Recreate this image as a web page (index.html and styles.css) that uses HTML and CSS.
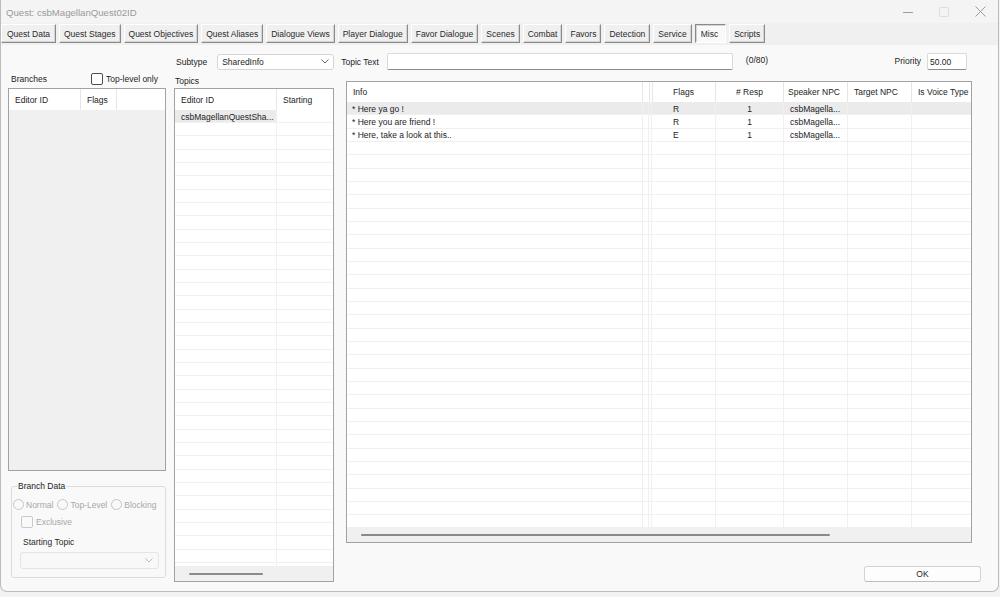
FILE: index.html
```html
<!DOCTYPE html>
<html>
<head>
<meta charset="utf-8">
<title>Quest: csbMagellanQuest02ID</title>
<link rel="stylesheet" href="styles.css">
</head>
<body>
<div class="window">
  <div class="titlebar">
    <span class="title">Quest: csbMagellanQuest02ID</span>
    <div class="controls">
      <span class="ctl"><svg width="10" height="10" viewBox="0 0 10 10"><path d="M0 5.5h10" stroke="#9c9c9c" stroke-width="1"/></svg></span>
      <span class="ctl"><svg width="10" height="10" viewBox="0 0 10 10"><rect x="0.5" y="0.5" width="9" height="9" rx="1" fill="none" stroke="#dcdcdc"/></svg></span>
      <span class="ctl"><svg width="11" height="11" viewBox="0 0 11 11"><path d="M0.5 0.5l10 10M10.5 0.5l-10 10" stroke="#9c9c9c" stroke-width="1"/></svg></span>
    </div>
  </div>

  <div class="tabs">
    <span class="tab tab-first">Quest Data</span>
    <span class="tab">Quest Stages</span>
    <span class="tab">Quest Objectives</span>
    <span class="tab">Quest Aliases</span>
    <span class="tab">Dialogue Views</span>
    <span class="tab">Player Dialogue</span>
    <span class="tab">Favor Dialogue</span>
    <span class="tab">Scenes</span>
    <span class="tab">Combat</span>
    <span class="tab">Favors</span>
    <span class="tab">Detection</span>
    <span class="tab">Service</span>
    <span class="tab tab-active">Misc</span>
    <span class="tab">Scripts</span>
  </div>

  <div class="content">
    <div class="toolbar">
      <span class="lbl lbl-subtype">Subtype</span>
      <div class="combo combo-subtype">
        <span>SharedInfo</span>
        <svg class="chev" width="8" height="5" viewBox="0 0 8 5"><path d="M0.5 0.5l3.5 3.5 3.5-3.5" fill="none" stroke="#666"/></svg>
      </div>
      <span class="lbl lbl-topic">Topic Text</span>
      <div class="field field-topic"></div>
      <span class="count">(0/80)</span>
      <span class="lbl lbl-priority">Priority</span>
      <div class="field field-priority">50.00</div>
    </div>

    <div class="left">
      <div class="branches-head">
        <span>Branches</span>
        <label class="chk-label"><span class="check"></span>Top-level only</label>
      </div>
      <div class="list list-branches">
        <div class="lhead cols-branches">
          <span class="hc">Editor ID</span>
          <span class="hc">Flags</span>
          <span class="hc hc-last"></span>
        </div>
        <div class="lbody lbody-disabled"></div>
      </div>
      <fieldset class="group">
        <legend>Branch Data</legend>
        <div class="radios">
          <span class="opt"><span class="radio"></span>Normal</span>
          <span class="opt"><span class="radio"></span>Top-Level</span>
          <span class="opt"><span class="radio"></span>Blocking</span>
        </div>
        <div class="excl"><span class="check check-dis"></span>Exclusive</div>
        <div class="start-lbl">Starting Topic</div>
        <div class="combo combo-dis">
          <span></span>
          <svg class="chev" width="8" height="5" viewBox="0 0 8 5"><path d="M0.5 0.5l3.5 3.5 3.5-3.5" fill="none" stroke="#bdbdbd"/></svg>
        </div>
      </fieldset>
    </div>

    <div class="mid">
      <div class="topics-lbl">Topics</div>
      <div class="list list-topics">
        <div class="lhead cols-topics">
          <span class="hc">Editor ID</span>
          <span class="hc hc-last">Starting</span>
        </div>
        <div class="lbody">
          <div class="row cols-topics">
            <span class="c sel">csbMagellanQuestSha...</span>
            <span class="c"></span>
          </div>
          <div class="fill cols-topics">
            <span class="c"></span>
            <span class="c"></span>
          </div>
        </div>
        <div class="hscroll"><span class="thumb thumb-topics"></span></div>
      </div>
    </div>

    <div class="right">
      <div class="list list-info">
        <div class="lhead cols-info">
          <span class="hc">Info</span>
          <span class="hc"></span>
          <span class="hc"></span>
          <span class="hc center">Flags</span>
          <span class="hc center"># Resp</span>
          <span class="hc hc-speaker">Speaker NPC</span>
          <span class="hc">Target NPC</span>
          <span class="hc hc-last">Is Voice Type</span>
        </div>
        <div class="lbody">
          <div class="row cols-info row-sel">
            <span class="c c-info">* Here ya go !</span>
            <span class="c"></span>
            <span class="c"></span>
            <span class="c c-flag">R</span>
            <span class="c center">1</span>
            <span class="c c-npc">csbMagella...</span>
            <span class="c"></span>
            <span class="c"></span>
          </div>
          <div class="row cols-info">
            <span class="c c-info">* Here you are friend !</span>
            <span class="c"></span>
            <span class="c"></span>
            <span class="c c-flag">R</span>
            <span class="c center">1</span>
            <span class="c c-npc">csbMagella...</span>
            <span class="c"></span>
            <span class="c"></span>
          </div>
          <div class="row cols-info">
            <span class="c c-info">* Here, take a look at this..</span>
            <span class="c"></span>
            <span class="c"></span>
            <span class="c c-flag">E</span>
            <span class="c center">1</span>
            <span class="c c-npc">csbMagella...</span>
            <span class="c"></span>
            <span class="c"></span>
          </div>
          <div class="fill cols-info">
            <span class="c"></span>
            <span class="c"></span>
            <span class="c"></span>
            <span class="c"></span>
            <span class="c"></span>
            <span class="c"></span>
            <span class="c"></span>
            <span class="c"></span>
          </div>
        </div>
        <div class="hscroll"><span class="thumb thumb-info"></span></div>
      </div>
      <button class="ok">OK</button>
    </div>
  </div>
</div>
</body>
</html>
```

FILE: styles.css
```css
* { box-sizing: border-box; }

html, body {
  margin: 0;
  padding: 0;
}

body {
  width: 1000px;
  height: 597px;
  overflow: hidden;
  background: #f2f2f2;
  font-family: "Liberation Sans", Arial, sans-serif;
  font-size: 8.5px;
  color: #1c1c1c;
}

.window {
  width: 999px;
  height: 592px;
  display: flex;
  flex-direction: column;
  background: #f9f9f9;
  border: 1px solid #bcbcbc;
  border-top: 0;
  border-radius: 0 0 7px 7px;
  overflow: hidden;
}

/* title bar */
.titlebar {
  height: 23px;
  flex: none;
  display: flex;
  align-items: center;
  background: #f4f4f4;
}

.title {
  padding: 1px 0 0 5px;
  font-size: 9.6px;
  color: #9a9a9a;
}

.controls {
  margin-left: auto;
  display: flex;
}

.ctl {
  width: 36px;
  height: 23px;
  display: flex;
  align-items: center;
  justify-content: center;
}

/* tab buttons */
.tabs {
  height: 22px;
  flex: none;
  display: flex;
  align-items: flex-start;
  gap: 3px;
  padding-top: 1px;
  background: #f0f0f0;
}

.tab {
  height: 19px;
  padding: 0 4px;
  display: flex;
  align-items: center;
  white-space: nowrap;
  background: #f0f0f0;
  border: 1px solid;
  border-color: #ffffff #8a8a8a #8a8a8a #ffffff;
  box-shadow: inset -1px -1px 0 #d4d4d4;
  color: #2a2a2a;
}

.tab-first { padding: 0 5px 0 5px; }

.tab-active {
  padding: 0 7px 0 5px;
  background: #f9f9f9;
  border-color: #8a8a8a #ffffff #ffffff #8a8a8a;
  box-shadow: inset 1px 1px 0 #d4d4d4;
}

/* content grid */
.content {
  flex: 1;
  display: grid;
  grid-template-columns: 158px 8px 160px 12px 635px;
  grid-template-rows: 17px 1fr;
  padding: 8px 0 0 7px;
}

.toolbar {
  grid-column: 3 / 6;
  grid-row: 1;
  display: flex;
  align-items: center;
  padding-right: 14px;
}

.lbl-subtype { margin-left: 2px; }

.combo {
  display: flex;
  align-items: center;
  justify-content: space-between;
  background: #ffffff;
  border: 1px solid #d5d5d5;
  border-radius: 3px;
}

.combo-subtype {
  margin-left: 10px;
  width: 117px;
  height: 16px;
  padding: 0 4px 0 4px;
}

.chev { flex: none; }

.lbl-topic { margin-left: 7px; }

.field {
  height: 17px;
  background: #ffffff;
  border: 1px solid #dadada;
  border-bottom-color: #8c8c8c;
  border-radius: 2px;
  display: flex;
  align-items: center;
  padding: 1px 2px 0 2px;
}

.field-topic {
  margin-left: 8px;
  width: 346px;
}

.count {
  margin-left: 13px;
  margin-top: -3px;
}

.lbl-priority {
  margin-left: auto;
  margin-top: -2px;
}

.field-priority {
  margin-left: 6px;
  width: 40px;
}

/* left column */
.left {
  grid-column: 1;
  grid-row: 1 / 3;
  display: flex;
  flex-direction: column;
}

.branches-head {
  margin-top: 18px;
  height: 17px;
  display: flex;
  align-items: flex-start;
  padding: 2px 0 0 3px;
}

.branches-head > span {
  margin-top: 1px;
}

.chk-label {
  margin-left: auto;
  margin-right: 8px;
  display: flex;
  align-items: center;
}

.check {
  width: 12px;
  height: 12px;
  border: 1px solid #4a4a4a;
  border-radius: 2px;
  background: #ffffff;
  margin-right: 3px;
  flex: none;
}

.check-dis {
  border-color: #c9c9c9;
  background: transparent;
}

/* lists */
.list {
  display: flex;
  flex-direction: column;
  border: 1px solid #a2a2a2;
  background: #ffffff;
  overflow: hidden;
}

.list-branches { height: 383px; }
.list-topics { height: 494px; }
.list-info { width: 626px; height: 462px; }

.lhead {
  display: grid;
  height: 21px;
  flex: none;
  background: #ffffff;
}

.list-info .lhead { height: 20px; }

.hc {
  display: flex;
  align-items: center;
  padding-left: 6px;
  border-right: 1px solid #e6e6e6;
  white-space: nowrap;
  overflow: hidden;
}

.hc-last { border-right: 0; }
.hc.center { justify-content: center; padding-left: 0; }
.hc-speaker { padding-left: 4px; }

.cols-branches { grid-template-columns: 72px 36px 1fr; }
.cols-topics { grid-template-columns: 102px 1fr; }
.cols-info { grid-template-columns: 296px 3px 6px 64px 68px 64px 64px 1fr; }

.lbody {
  flex: 1;
  display: flex;
  flex-direction: column;
  overflow: hidden;
}

.lbody-disabled { background: #f0f0f0; }

.row {
  display: grid;
  height: 13.33px;
  flex: none;
  border-bottom: 1px solid #f0f0f0;
}

.row-sel { background: #ebebeb; }

.c {
  display: flex;
  align-items: center;
  white-space: nowrap;
  overflow: hidden;
  border-right: 1px solid #f0f0f0;
  padding: 1px 0 0 5px;
}

.c:last-child { border-right: 0; }
.c.sel { background: #ebebeb; padding-left: 6px; }
.c.center { justify-content: center; padding-left: 0; }
.c-flag { padding-left: 21px; }
.c-npc { padding-left: 6px; }

.fill {
  flex: 1;
  display: grid;
  background: repeating-linear-gradient(to bottom, #ffffff 0, #ffffff 12.33px, #f0f0f0 12.33px, #f0f0f0 13.33px);
}

.hscroll {
  height: 15px;
  flex: none;
  display: flex;
  align-items: center;
  padding-left: 14px;
  background: #f0f0f0;
}

.thumb {
  height: 2px;
  border-radius: 1px;
  background: #8a8a8a;
}

.thumb-topics { width: 74px; }
.thumb-info { width: 469px; }

/* group box */
.group {
  margin: 9px 0 0 3px;
  width: 155px;
  height: 98px;
  padding: 0 0 0 1px;
  border: 1px solid #dcdcdc;
  border-radius: 3px;
  min-width: 0;
}

.group legend {
  margin-left: 4px;
  padding: 0 1px;
  line-height: 12px;
}

.radios {
  margin-top: 7px;
  display: flex;
  align-items: center;
  gap: 4px;
  color: #a8a8a8;
}

.opt {
  display: flex;
  align-items: center;
}

.radio {
  width: 11px;
  height: 11px;
  border: 1px solid #c6c6c6;
  border-radius: 50%;
  margin-right: 2px;
  flex: none;
}

.excl {
  margin-top: 6px;
  padding-left: 8px;
  display: flex;
  align-items: center;
  color: #a8a8a8;
}

.start-lbl {
  margin-top: 9px;
  padding-left: 10px;
  color: #2a2a2a;
}

.combo-dis {
  margin: 5px 0 0 7px;
  width: 139px;
  height: 17px;
  padding: 0 5px 0 4px;
  background: #f8f8f8;
  border-color: #e4e4e4;
}

/* middle column */
.mid {
  grid-column: 3;
  grid-row: 2;
  display: flex;
  flex-direction: column;
}

.topics-lbl {
  margin-top: 4px;
  height: 14px;
  padding-left: 1px;
  display: flex;
  align-items: center;
}

/* right column */
.right {
  grid-column: 5;
  grid-row: 2;
  display: flex;
  flex-direction: column;
  align-items: flex-start;
}

.list-info { margin-top: 11px; }

.ok {
  align-self: flex-end;
  margin-top: 23px;
  width: 117px;
  height: 16px;
  padding: 0;
  font-family: "Liberation Sans", Arial, sans-serif;
  font-size: 8.5px;
  color: #1c1c1c;
  background: #fdfdfd;
  border: 1px solid #d3d3d3;
  border-bottom-color: #bcbcbc;
  border-radius: 3px;
}
```
